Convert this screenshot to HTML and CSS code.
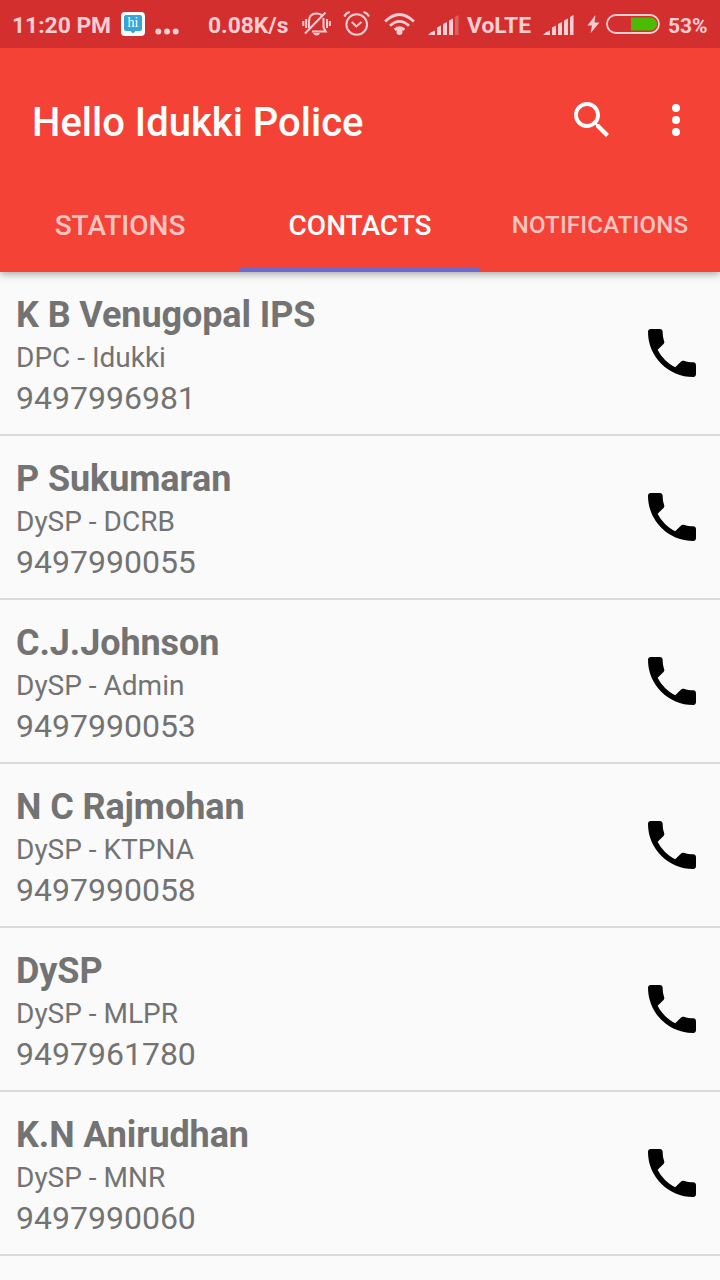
FILE: index.html
```html
<!DOCTYPE html>
<html lang="en">
    <head>
        <title>Hello Idukki Police</title>
        <meta charset="utf-8">
        <meta name="viewport" content="width=device-width, initial-scale=1.0">
        <link rel="stylesheet" href="styles.css">
    </head>
    <body>
        <svg class="sprite" width="0" height="0">
            <symbol id="call" viewBox="0 0 24 24">
                <path d="M6.62 10.79c1.44 2.83 3.76 5.14 6.59 6.59l2.2-2.2c.27-.27.67-.36 1.02-.24 1.12.37 2.33.57 3.57.57.55 0 1 .45 1 1V20c0 .55-.45 1-1 1-9.39 0-17-7.61-17-17 0-.55.45-1 1-1h3.5c.55 0 1 .45 1 1 0 1.25.2 2.45.57 3.57.11.35.03.74-.25 1.02l-2.2 2.2z"/>
            </symbol>
        </svg>
        <header>
            <div class="status-bar">
                <span class="time">11:20 PM</span>
                <div class="hike">
                    <svg width="24" height="24" viewBox="0 0 24 24">
                        <rect width="24" height="24" rx="4" fill="#fff"/>
                        <path d="M5 3h14q2 0 2 2v12q0 2-2 2h-4.500l-2.500 2.500-2.500-2.500H5q-2 0-2-2V5q0-2 2-2z" fill="#36a5d8"/>
                    </svg>
                    <span class="hike-text">hi</span>
                </div>
                <svg class="more" width="24" height="48" viewBox="0 0 24 48">
                    <circle cx="3.300" cy="31.500" r="3"/>
                    <circle cx="12" cy="31.500" r="3"/>
                    <circle cx="20.700" cy="31.500" r="3"/>
                </svg>
                <span class="speed">0.08K/s</span>
                <svg class="bell line" width="30" height="48" viewBox="302 0 30 48">
                    <path d="M309 28V21q0-7.500 7.500-7.500q3 0 5 1.500M323.500 18V27.500l2.200 4H312M305 33.500L325.500 12.500"/>
                    <path d="M303.300 21v5M306.200 19v9M327 19v9M329.900 21v5"/>
                    <path d="M313 33h7q-1 2.500-3.500 2.500t-3.500-2.500z" fill="#ffcdd2" stroke="none"/>
                </svg>
                <svg class="alarm line" width="28" height="48" viewBox="343 0 28 48">
                    <circle cx="356.700" cy="24.500" r="10.300"/>
                    <path d="M351.800 22l4.500 4.500 5.200-4.500M344.300 16.500q1.500-3.500 5.500-4.500M369 16.500q-1.500-3.500-5.500-4.500"/>
                </svg>
                <svg class="wifi" width="32" height="48" viewBox="384 0 32 48">
                    <path d="M385.200 21.500Q399.500 7.500 413.800 21.500M390 25.800Q399.500 17 409 25.800M394.700 29.800Q399.500 25.800 404.300 29.800"/>
                    <circle cx="399.500" cy="32" r="3"/>
                </svg>
                <svg class="signal" width="31" height="48" viewBox="428 0 31 48">
                    <path d="M428 35q2.500-3.500 7-4.500V35zM437 27.500l4-2V35H437zM443 24l4-2v13H443zM449 20.500l4-2V35H449z"/>
                    <path class="faint" d="M455 17l3.500-2v20H455z"/>
                </svg>
                <span class="volte">VoLTE</span>
                <svg class="signal-full" width="31" height="48" viewBox="428 0 31 48">
                    <path d="M428 35q2.500-3.500 7-4.500V35zM437 27.500l4-2V35H437zM443 24l4-2v13H443zM449 20.500l4-2V35H449zM455 17l3.500-2v20H455z"/>
                </svg>
                <svg class="bolt" width="13" height="48" viewBox="587 0 13 48">
                    <path d="M595.500 15l-8 10.500h4.500l-1.500 7.700 9-10.700h-5z"/>
                </svg>
                <svg class="battery" width="54" height="48" viewBox="606 0 54 48">
                    <path d="M631 17.500h19.500a6.500 6.500 0 0 1 0 13H631z" fill="#4cbb05"/>
                    <rect x="607" y="15" width="52" height="18" rx="9" fill="none" stroke="#ffcdd2" stroke-width="1.800"/>
                </svg>
                <span class="percent">53%</span>
            </div>
            <div class="toolbar">
                <h1>Hello Idukki Police</h1>
                <svg class="search" width="48" height="48" viewBox="0 0 24 24">
                    <path d="M15.500 14h-.79l-.28-.27C15.410 12.590 16 11.110 16 9.500 16 5.910 13.090 3 9.500 3S3 5.910 3 9.500 5.910 16 9.500 16c1.610 0 3.090-.59 4.230-1.570l.27.28v.79l5 4.990L20.490 19l-4.990-5zm-6 0C7.010 14 5 11.990 5 9.500S7.010 5 9.500 5 14 7.010 14 9.500 11.990 14 9.500 14z"/>
                </svg>
                <svg class="overflow" width="48" height="48" viewBox="0 0 24 24">
                    <circle cx="12" cy="6" r="2"/>
                    <circle cx="12" cy="12" r="2"/>
                    <circle cx="12" cy="18" r="2"/>
                </svg>
            </div>
            <nav class="tabs">
                <div class="tab">STATIONS</div>
                <div class="tab active">CONTACTS</div>
                <div class="tab small">NOTIFICATIONS</div>
            </nav>
        </header>
        <main>
            <div class="contact">
                <div class="info">
                    <div class="name">K B Venugopal IPS</div>
                    <div class="role">DPC - Idukki</div>
                    <div class="phone">9497996981</div>
                </div>
                <svg class="call" width="64" height="64"><use href="#call"/></svg>
            </div>
            <div class="contact">
                <div class="info">
                    <div class="name">P Sukumaran</div>
                    <div class="role">DySP - DCRB</div>
                    <div class="phone">9497990055</div>
                </div>
                <svg class="call" width="64" height="64"><use href="#call"/></svg>
            </div>
            <div class="contact">
                <div class="info">
                    <div class="name">C.J.Johnson</div>
                    <div class="role">DySP - Admin</div>
                    <div class="phone">9497990053</div>
                </div>
                <svg class="call" width="64" height="64"><use href="#call"/></svg>
            </div>
            <div class="contact">
                <div class="info">
                    <div class="name">N C Rajmohan</div>
                    <div class="role">DySP - KTPNA</div>
                    <div class="phone">9497990058</div>
                </div>
                <svg class="call" width="64" height="64"><use href="#call"/></svg>
            </div>
            <div class="contact">
                <div class="info">
                    <div class="name">DySP</div>
                    <div class="role">DySP - MLPR</div>
                    <div class="phone">9497961780</div>
                </div>
                <svg class="call" width="64" height="64"><use href="#call"/></svg>
            </div>
            <div class="contact">
                <div class="info">
                    <div class="name">K.N Anirudhan</div>
                    <div class="role">DySP - MNR</div>
                    <div class="phone">9497990060</div>
                </div>
                <svg class="call" width="64" height="64"><use href="#call"/></svg>
            </div>
        </main>
    </body>
</html>
```

FILE: styles.css
```css
* {
    margin: 0;
    padding: 0;
    box-sizing: border-box;
}
body {
    width: 720px;
    height: 1280px;
    overflow: hidden;
    background-color: #fafafa;
    font-family: Roboto, sans-serif;
    color: #737373;
}
svg {
    display: block;
    flex-shrink: 0;
}
.sprite {
    position: absolute;
}
header {
    position: relative;
    height: 272px;
    background-color: #f44336;
    box-shadow: 0 2px 8px rgba(0, 0, 0, 0.35);
}

/* status bar */
.status-bar {
    display: flex;
    align-items: center;
    height: 48px;
    padding-left: 12px;
    background-color: #d32f2f;
    color: #ffcdd2;
    fill: #ffcdd2;
    font-size: 22.8px;
    font-weight: 700;
    line-height: 48px;
    white-space: nowrap;
}
.status-bar span {
    flex-shrink: 0;
}
.time {
    width: 109px;
    padding-top: 3px;
}
.hike {
    position: relative;
    width: 24px;
    margin-right: 10px;
}
.status-bar .hike-text {
    position: absolute;
    top: 0;
    left: 0;
    width: 24px;
    text-align: center;
    font-family: "Liberation Serif", serif;
    font-size: 14px;
    font-weight: 400;
    line-height: 21px;
    color: #fff;
}
.more {
    margin-right: 29px;
}
.speed {
    width: 94px;
    padding-top: 3px;
}
.line {
    fill: none;
    stroke: #ffcdd2;
    stroke-width: 2;
}
.bell {
    margin-right: 11px;
}
.alarm {
    margin-right: 13px;
}
.wifi {
    margin-right: 12px;
}
.wifi path {
    fill: none;
    stroke: #ffcdd2;
    stroke-width: 2.8;
}
.signal {
    margin-right: 8px;
}
.faint {
    opacity: 0.3;
}
.volte {
    width: 76px;
    padding-top: 3px;
}
.signal-full {
    margin-right: 13px;
}
.bolt {
    margin-right: 6px;
}
.battery {
    margin-right: 8px;
}
.percent {
    padding-top: 3px;
    font-size: 21px;
}

/* title and actions */
.toolbar {
    display: flex;
    align-items: center;
    height: 144px;
    padding: 0 20px 0 32px;
    fill: #fff;
}
h1 {
    flex: 1;
    padding-top: 6px;
    font-size: 40px;
    font-weight: 500;
    line-height: 48px;
    color: #fff;
}
.search {
    margin-right: 36px;
}
.tabs {
    display: flex;
    height: 80px;
}
.tab {
    width: 240px;
    padding-top: 18px;
    text-align: center;
    font-size: 28px;
    font-weight: 500;
    line-height: 32px;
    color: rgba(255, 255, 255, 0.7);
}
.tab.active {
    color: #fff;
    border-bottom: 4px solid #6a6bcb;
}
.tab.small {
    padding-top: 17px;
    font-size: 24px;
    letter-spacing: 0.2px;
}

/* contact list */
.contact {
    display: flex;
    align-items: center;
    height: 164px;
    padding: 0 16px;
    border-bottom: 2px solid #dadada;
}
.info {
    flex: 1;
    padding-top: 6px;
}
.name {
    font-size: 36px;
    font-weight: 700;
    line-height: 44px;
    letter-spacing: -0.1px;
}
.role {
    padding-top: 1px;
    font-size: 28px;
    line-height: 40px;
}
.phone {
    font-size: 32px;
    line-height: 41px;
}
.call {
    fill: #000;
}
```
